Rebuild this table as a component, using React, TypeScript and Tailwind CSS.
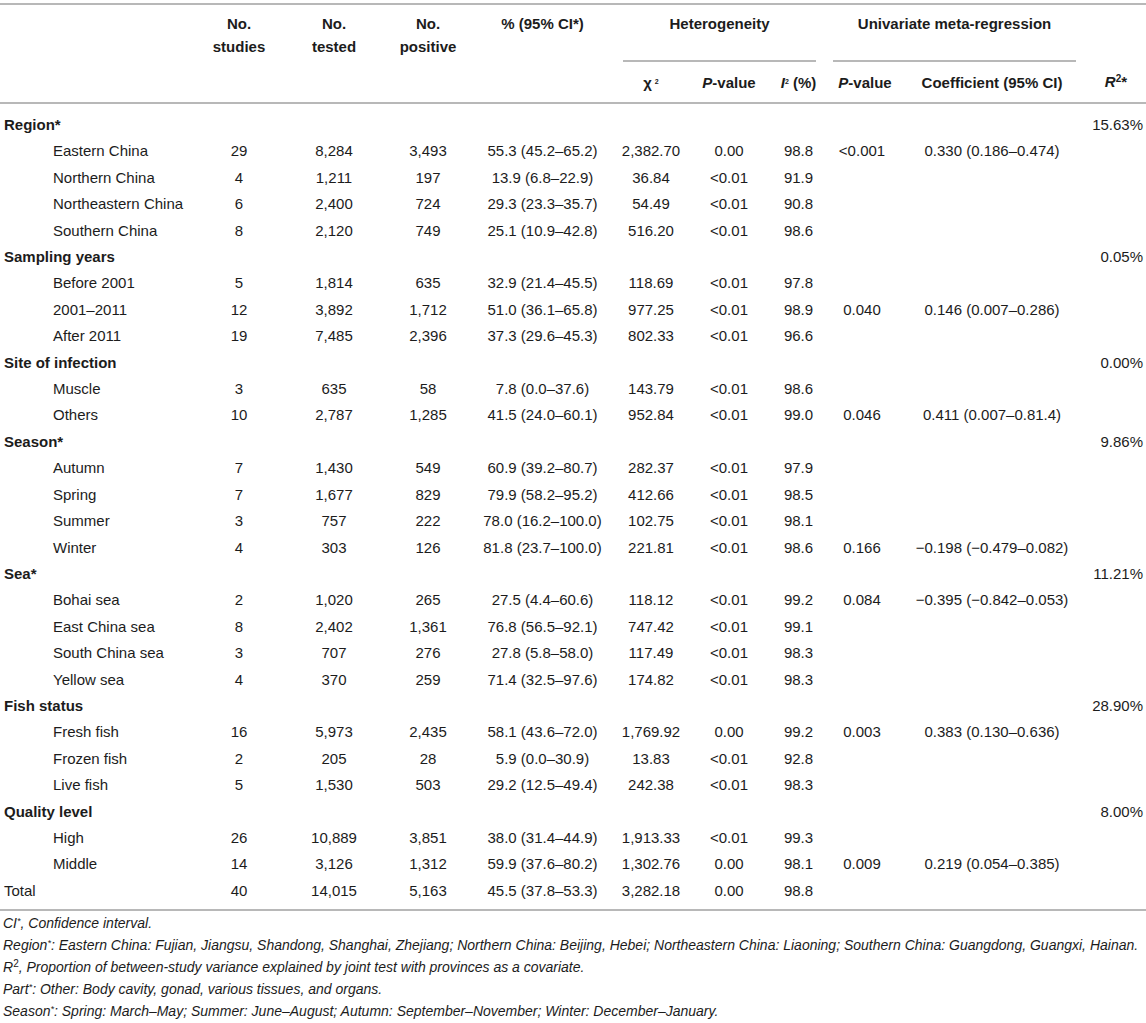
import React from "react";

type Row = {
  label: string;
  group?: boolean;
  total?: boolean;
  r2?: string;
  v?: string[];
};

const rows: Row[] = [
  { label: "Region*", group: true, r2: "15.63%" },
  { label: "Eastern China", v: ["29", "8,284", "3,493", "55.3 (45.2–65.2)", "2,382.70", "0.00", "98.8", "<0.001", "0.330 (0.186–0.474)"] },
  { label: "Northern China", v: ["4", "1,211", "197", "13.9 (6.8–22.9)", "36.84", "<0.01", "91.9", "", ""] },
  { label: "Northeastern China", v: ["6", "2,400", "724", "29.3 (23.3–35.7)", "54.49", "<0.01", "90.8", "", ""] },
  { label: "Southern China", v: ["8", "2,120", "749", "25.1 (10.9–42.8)", "516.20", "<0.01", "98.6", "", ""] },
  { label: "Sampling years", group: true, r2: "0.05%" },
  { label: "Before 2001", v: ["5", "1,814", "635", "32.9 (21.4–45.5)", "118.69", "<0.01", "97.8", "", ""] },
  { label: "2001–2011", v: ["12", "3,892", "1,712", "51.0 (36.1–65.8)", "977.25", "<0.01", "98.9", "0.040", "0.146 (0.007–0.286)"] },
  { label: "After 2011", v: ["19", "7,485", "2,396", "37.3 (29.6–45.3)", "802.33", "<0.01", "96.6", "", ""] },
  { label: "Site of infection", group: true, r2: "0.00%" },
  { label: "Muscle", v: ["3", "635", "58", "7.8 (0.0–37.6)", "143.79", "<0.01", "98.6", "", ""] },
  { label: "Others", v: ["10", "2,787", "1,285", "41.5 (24.0–60.1)", "952.84", "<0.01", "99.0", "0.046", "0.411 (0.007–0.81.4)"] },
  { label: "Season*", group: true, r2: "9.86%" },
  { label: "Autumn", v: ["7", "1,430", "549", "60.9 (39.2–80.7)", "282.37", "<0.01", "97.9", "", ""] },
  { label: "Spring", v: ["7", "1,677", "829", "79.9 (58.2–95.2)", "412.66", "<0.01", "98.5", "", ""] },
  { label: "Summer", v: ["3", "757", "222", "78.0 (16.2–100.0)", "102.75", "<0.01", "98.1", "", ""] },
  { label: "Winter", v: ["4", "303", "126", "81.8 (23.7–100.0)", "221.81", "<0.01", "98.6", "0.166", "−0.198 (−0.479–0.082)"] },
  { label: "Sea*", group: true, r2: "11.21%" },
  { label: "Bohai sea", v: ["2", "1,020", "265", "27.5 (4.4–60.6)", "118.12", "<0.01", "99.2", "0.084", "−0.395 (−0.842–0.053)"] },
  { label: "East China sea", v: ["8", "2,402", "1,361", "76.8 (56.5–92.1)", "747.42", "<0.01", "99.1", "", ""] },
  { label: "South China sea", v: ["3", "707", "276", "27.8 (5.8–58.0)", "117.49", "<0.01", "98.3", "", ""] },
  { label: "Yellow sea", v: ["4", "370", "259", "71.4 (32.5–97.6)", "174.82", "<0.01", "98.3", "", ""] },
  { label: "Fish status", group: true, r2: "28.90%" },
  { label: "Fresh fish", v: ["16", "5,973", "2,435", "58.1 (43.6–72.0)", "1,769.92", "0.00", "99.2", "0.003", "0.383 (0.130–0.636)"] },
  { label: "Frozen fish", v: ["2", "205", "28", "5.9 (0.0–30.9)", "13.83", "<0.01", "92.8", "", ""] },
  { label: "Live fish", v: ["5", "1,530", "503", "29.2 (12.5–49.4)", "242.38", "<0.01", "98.3", "", ""] },
  { label: "Quality level", group: true, r2: "8.00%" },
  { label: "High", v: ["26", "10,889", "3,851", "38.0 (31.4–44.9)", "1,913.33", "<0.01", "99.3", "", ""] },
  { label: "Middle", v: ["14", "3,126", "1,312", "59.9 (37.6–80.2)", "1,302.76", "0.00", "98.1", "0.009", "0.219 (0.054–0.385)"] },
  { label: "Total", total: true, v: ["40", "14,015", "5,163", "45.5 (37.8–53.3)", "3,282.18", "0.00", "98.8", "", ""] },
];

export default function App() {
  return (
    <div
      className="w-[1146px] h-[1023px] bg-white text-[#1c1c1c] pt-[3px] overflow-hidden"
      style={{ fontFamily: '"Liberation Sans", Arial, Helvetica, sans-serif' }}
    >
      <table className="w-full table-fixed border-collapse text-[15px]">
        <colgroup>
          <col className="w-[200px]" />
          <col className="w-[78px]" />
          <col className="w-[112px]" />
          <col className="w-[76px]" />
          <col className="w-[153px]" />
          <col className="w-[64px]" />
          <col className="w-[92px]" />
          <col className="w-[47px]" />
          <col className="w-[80px]" />
          <col className="w-[180px]" />
          <col className="w-[64px]" />
        </colgroup>
        <thead className="font-bold">
          <tr className="h-[58px] border-t-2 border-[#b8b8b8]">
            <th rowSpan={2} className="p-0 border-b-2 border-[#b8b8b8]"></th>
            <th rowSpan={2} className="p-0 pt-[7px] align-top leading-[23px] text-center border-b-2 border-[#b8b8b8]">
              No.<br />studies
            </th>
            <th rowSpan={2} className="p-0 pt-[7px] align-top leading-[23px] text-center border-b-2 border-[#b8b8b8]">
              No.<br />tested
            </th>
            <th rowSpan={2} className="p-0 pt-[7px] align-top leading-[23px] text-center border-b-2 border-[#b8b8b8]">
              No.<br />positive
            </th>
            <th rowSpan={2} className="p-0 pt-[7px] align-top leading-[23px] text-center border-b-2 border-[#b8b8b8]">
              % (95% CI*)
            </th>
            <th colSpan={3} className="p-0 align-top">
              <div className="flex flex-col h-[58px]">
                <div className="pt-[7px] leading-[23px] text-center pl-[4px] pr-[6px]">Heterogeneity</div>
                <div className="mt-auto mb-[1px] ml-[4px] mr-[6px] h-[2px] bg-[#b8b8b8]"></div>
              </div>
            </th>
            <th colSpan={2} className="p-0 align-top">
              <div className="flex flex-col h-[58px]">
                <div className="pt-[7px] leading-[23px] text-center pl-[11px] pr-[6px]">Univariate meta-regression</div>
                <div className="mt-auto mb-[1px] ml-[11px] mr-[6px] h-[2px] bg-[#b8b8b8]"></div>
              </div>
            </th>
            <th rowSpan={2} className="p-0 align-bottom pb-[9px] leading-[22px] text-right pr-[19px] border-b-2 border-[#b8b8b8]">
              <i>R</i>
              <sup className="text-[10px]">2</sup>*
            </th>
          </tr>
          <tr className="h-[40px]">
            <th className="p-0 text-center leading-[22px] border-b-2 border-[#b8b8b8]">
              χ<sup className="text-[7px] ml-[3px]">2</sup>
            </th>
            <th className="p-0 text-center leading-[22px] border-b-2 border-[#b8b8b8]">
              <i>P</i>-value
            </th>
            <th className="p-0 text-center leading-[22px] whitespace-nowrap border-b-2 border-[#b8b8b8]">
              <i>I</i>
              <sup className="text-[7px]">2</sup> (%)
            </th>
            <th className="p-0 text-center pl-[6px] leading-[22px] border-b-2 border-[#b8b8b8]">
              <i>P</i>-value
            </th>
            <th className="p-0 text-center leading-[22px] whitespace-nowrap border-b-2 border-[#b8b8b8]">
              Coefficient (95% CI)
            </th>
          </tr>
        </thead>
        <tbody>
          <tr className="h-[9px]">
            <td colSpan={11} className="p-0"></td>
          </tr>
          {rows.map((r, i) => (
            <tr key={i} className="h-[26.4px] leading-[26.4px]">
              <td
                className={
                  r.group
                    ? "p-0 pl-[4px] font-bold whitespace-nowrap"
                    : r.total
                    ? "p-0 pl-[4px] whitespace-nowrap"
                    : "p-0 pl-[53px] whitespace-nowrap"
                }
              >
                {r.label}
              </td>
              {r.group ? (
                <>
                  <td colSpan={9} className="p-0"></td>
                  <td className="p-0 pr-[3px] text-right">{r.r2}</td>
                </>
              ) : (
                <>
                  {(r.v || []).map((c, j) => (
                    <td key={j} className="p-0 text-center whitespace-nowrap">
                      {c}
                    </td>
                  ))}
                  <td className="p-0"></td>
                </>
              )}
            </tr>
          ))}
          <tr className="h-[6px]">
            <td colSpan={11} className="p-0 border-b-2 border-[#b8b8b8]"></td>
          </tr>
        </tbody>
      </table>
      <div className="italic text-[14px] leading-[22px] pl-[3px] mt-[1px] whitespace-nowrap">
        <div>
          CI<sup className="text-[9px]">*</sup>, Confidence interval.
        </div>
        <div>
          Region<sup className="text-[9px]">*</sup>: Eastern China: Fujian, Jiangsu, Shandong, Shanghai, Zhejiang; Northern China: Beijing, Hebei; Northeastern China: Liaoning; Southern China: Guangdong, Guangxi, Hainan.
        </div>
        <div>
          R<sup className="not-italic text-[10px]">2</sup>, Proportion of between-study variance explained by joint test with provinces as a covariate.
        </div>
        <div>
          Part<sup className="text-[9px]">*</sup>: Other: Body cavity, gonad, various tissues, and organs.
        </div>
        <div>
          Season<sup className="text-[9px]">*</sup>: Spring: March–May; Summer: June–August; Autumn: September–November; Winter: December–January.
        </div>
      </div>
    </div>
  );
}
